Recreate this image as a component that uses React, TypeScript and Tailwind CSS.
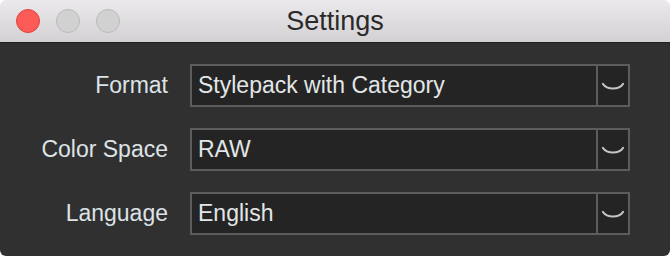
import React from "react";

const rows = [
  { label: "Format", value: "Stylepack with Category" },
  { label: "Color Space", value: "RAW" },
  { label: "Language", value: "English" },
];

function Chevron() {
  return (
    <svg width="24" height="9" viewBox="0 0 24 9" className="block">
      <path
        d="M2 2 Q5 6.5 12 6.5 Q19 6.5 22 2"
        fill="none"
        stroke="#c4c4c4"
        strokeWidth="2.2"
        strokeLinecap="round"
      />
    </svg>
  );
}

const App: React.FC = () => {
  return (
    <div className="h-[256px] w-[670px] overflow-hidden bg-white font-['Liberation_Sans',Arial,sans-serif]">
      <div className="flex h-full flex-col overflow-hidden rounded-[6px]">
        <div className="relative flex h-[43px] shrink-0 items-center justify-center border-b border-[#1e1e1e] bg-gradient-to-b from-[#ebe9eb] to-[#d3d1d3]">
          <div className="absolute left-[16px] top-[9px] flex gap-[16px]">
            <span className="h-[24px] w-[24px] rounded-full border border-[#e0443e] bg-[#fc5b57]" />
            <span className="h-[24px] w-[24px] rounded-full border border-[#bcbcbc] bg-[#d1d1d1]" />
            <span className="h-[24px] w-[24px] rounded-full border border-[#bcbcbc] bg-[#d1d1d1]" />
          </div>
          <span className="text-[27px] text-[#2a2a2a]">Settings</span>
        </div>
        <div className="flex flex-1 flex-col gap-[21px] bg-[#303030] pt-[21px]">
          {rows.map(({ label, value }) => (
            <div key={label} className="flex h-[43px] items-center">
              <span className="w-[168px] text-right text-[23px] text-[#dde3e6]">
                {label}
              </span>
              <div className="ml-[22px] flex h-[43px] w-[440px] border-2 border-[#5c5c5c] bg-[#242424]">
                <span className="flex flex-1 items-center pl-[6px] text-[23px] text-[#e2e6e8]">
                  {value}
                </span>
                <div className="flex w-[32px] items-center justify-center border-l-2 border-[#5c5c5c] pt-[2px]">
                  <Chevron />
                </div>
              </div>
            </div>
          ))}
        </div>
      </div>
    </div>
  );
};

export default App;
